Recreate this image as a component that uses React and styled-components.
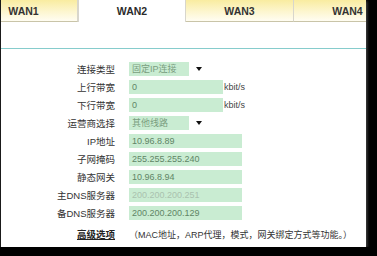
import React from "react";
import styled, { createGlobalStyle } from "styled-components";

const Global = createGlobalStyle`
  html, body { margin: 0; padding: 0; background: #000; }
  body { font-family: "Liberation Sans", "Noto Sans CJK SC", sans-serif; }
`;

const Panel = styled.div`
  width: 366px;
  height: 247px;
  background: #fff;
  border-left: 1px solid #1a1a1a;
  box-sizing: border-box;
  overflow: hidden;
  box-shadow: 1px 1px 3px rgba(90, 90, 90, 0.9);
`;

const TabBar = styled.div`
  display: flex;
  height: 22px;
  margin-left: -31px;
`;

const Tab = styled.div`
  flex: 0 0 108px;
  height: 22px;
  box-sizing: border-box;
  display: flex;
  align-items: center;
  justify-content: center;
  font: bold 10.5px "Liberation Sans", Arial, sans-serif;
  color: ${(p) => (p.$active ? "#2b2b2b" : "#333")};
  background: ${(p) =>
    p.$active ? "#fff" : "linear-gradient(#f9eca0, #fdf6cf 55%, #fffdf2)"};
  border-bottom: ${(p) => (p.$active ? "none" : "1px solid #c9c4a8")};
  border-right: 1px solid #d8d6cc;
  border-left: ${(p) => (p.$active ? "1px solid #d8d6cc" : "none")};
`;

const Divider = styled.div`
  height: 1px;
  background: #86cccc;
  margin-top: 26px;
`;

const Form = styled.div`
  display: flex;
  flex-direction: column;
  padding-top: 11px;
`;

const Row = styled.div`
  display: grid;
  grid-template-columns: 114px auto;
  column-gap: 14px;
  align-items: center;
  height: 18px;
  margin-top: ${(p) => p.$mt || 0}px;
`;

const Label = styled.div`
  text-align: right;
  font-size: 9.5px;
  color: ${(p) => (p.$strong ? "#222" : "#333")};
  font-weight: ${(p) => (p.$strong ? "bold" : "normal")};
  text-decoration: ${(p) => (p.$strong ? "underline" : "none")};
  font-family: "Liberation Sans", "Noto Sans CJK SC", sans-serif;
  white-space: nowrap;
`;

const Field = styled.div`
  display: flex;
  align-items: center;
`;

const Input = styled.div`
  width: ${(p) => p.$w}px;
  height: 14px;
  background: #c9ecd2;
  box-sizing: border-box;
  padding-left: 3px;
  font-size: 9px;
  line-height: 14px;
  color: ${(p) => (p.$dim ? "#a9c2af" : "#5f8566")};
  font-family: "Liberation Sans", "Noto Sans CJK SC", sans-serif;
  white-space: nowrap;
`;

const Select = styled.div`
  display: flex;
  width: 74px;
  height: 14px;
`;

const SelectValue = styled(Input)`
  width: 60px;
  color: #7a9e80;
`;

const Arrow = styled.div`
  flex: 1;
  display: flex;
  align-items: center;
  justify-content: center;
  &::after {
    content: "";
    border-left: 3px solid transparent;
    border-right: 3px solid transparent;
    border-top: 4px solid #111;
    margin-left: 5px;
  }
`;

const Unit = styled.span`
  font-size: 9px;
  color: #444;
  margin-left: 1px;
`;

const Note = styled.div`
  font-size: 9px;
  color: #333;
  font-family: "Liberation Sans", "Noto Sans CJK SC", sans-serif;
  white-space: nowrap;
`;

const rows = [
  { label: "连接类型", type: "select", value: "固定IP连接" },
  { label: "上行带宽", type: "bw", value: "0" },
  { label: "下行带宽", type: "bw", value: "0" },
  { label: "运营商选择", type: "select", value: "其他线路" },
  { label: "IP地址", type: "ip", value: "10.96.8.89" },
  { label: "子网掩码", type: "ip", value: "255.255.255.240" },
  { label: "静态网关", type: "ip", value: "10.96.8.94" },
  { label: "主DNS服务器", type: "ip", value: "200.200.200.251", dim: true },
  { label: "备DNS服务器", type: "ip", value: "200.200.200.129" },
];

export default function App() {
  return (
    <>
      <Global />
      <Panel>
        <TabBar>
          <Tab>WAN1</Tab>
          <Tab $active>WAN2</Tab>
          <Tab>WAN3</Tab>
          <Tab>WAN4</Tab>
        </TabBar>
        <Divider />
        <Form>
          {rows.map((r) => (
            <Row key={r.label}>
              <Label>{r.label}</Label>
              <Field>
                {r.type === "select" && (
                  <Select>
                    <SelectValue>{r.value}</SelectValue>
                    <Arrow />
                  </Select>
                )}
                {r.type === "bw" && (
                  <>
                    <Input $w={94}>{r.value}</Input>
                    <Unit>kbit/s</Unit>
                  </>
                )}
                {r.type === "ip" && (
                  <Input $w={113} $dim={r.dim}>
                    {r.value}
                  </Input>
                )}
              </Field>
            </Row>
          ))}
          <Row $mt={3}>
            <Label $strong>高级选项</Label>
            <Note>（MAC地址，ARP代理，模式，网关绑定方式等功能。）</Note>
          </Row>
        </Form>
      </Panel>
    </>
  );
}
